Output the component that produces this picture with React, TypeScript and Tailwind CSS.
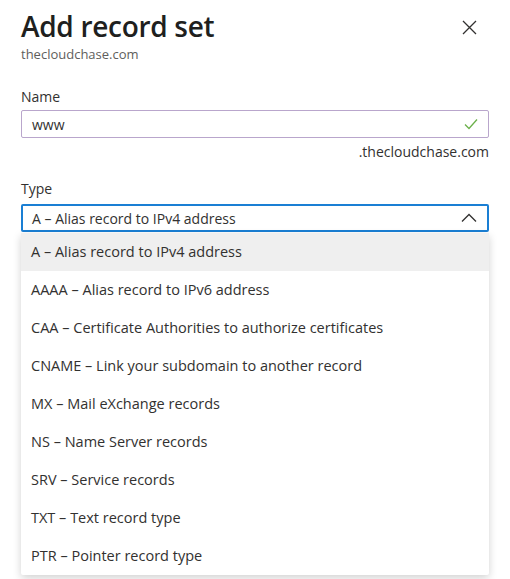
import { useState } from 'react';

const options = [
  'A – Alias record to IPv4 address',
  'AAAA – Alias record to IPv6 address',
  'CAA – Certificate Authorities to authorize certificates',
  'CNAME – Link your subdomain to another record',
  'MX – Mail eXchange records',
  'NS – Name Server records',
  'SRV – Service records',
  'TXT – Text record type',
  'PTR – Pointer record type',
];

export default function App() {
  const [selected] = useState(0);

  return (
    <div className="min-h-screen bg-white text-[#1f1f1f] font-['Open_Sans',sans-serif] px-[21px] pt-[6px]">
      {/* Header */}
      <div className="flex items-start justify-between">
        <div>
          <h1 className="text-[28px] font-semibold leading-[40px] tracking-[-0.3px] text-[#201f1e]">Add record set</h1>
          <p className="text-[13px] text-[#605e5c] leading-[18px] mt-[-1px]">thecloudchase.com</p>
        </div>
        <button className="mt-[14px] mr-[12px] text-[#323130]">
          <svg width="15" height="15" viewBox="0 0 15 15" fill="none" stroke="currentColor" strokeWidth="1.3">
            <path d="M1 1 L14 14 M14 1 L1 14" />
          </svg>
        </button>
      </div>

      {/* Name field */}
      <div className="mt-[25px]">
        <label className="block text-[14px] leading-[18px] text-[#323130]">Name</label>
        <div className="mt-[4px] h-[28px] border border-[#b9a6cc] rounded-[2px] flex items-center justify-between px-[10px]">
          <span className="text-[14px] text-[#323130]">www</span>
          <svg width="14" height="12" viewBox="0 0 14 12" fill="none" stroke="#6bb04a" strokeWidth="1.3">
            <path d="M1 6.5 L5 10.5 L13 1.5" />
          </svg>
        </div>
        <div className="text-right text-[14px] leading-[20px] mt-[4px] text-[#323130]">.thecloudchase.com</div>
      </div>

      {/* Type field */}
      <div className="mt-[18px]">
        <label className="block text-[14px] leading-[18px] text-[#323130]">Type</label>
        <div className="mt-[6px] h-[28px] border-2 border-[#1a7fd4] rounded-[2px] flex items-center justify-between pl-[9px] pr-[10px]">
          <span className="text-[14px] text-[#323130]">{options[selected]}</span>
          <svg width="16" height="10" viewBox="0 0 16 10" fill="none" stroke="#323130" strokeWidth="1.3">
            <path d="M1 8.5 L8 1.5 L15 8.5" />
          </svg>
        </div>
        <ul className="mt-[1px] bg-white shadow-[0_3px_8px_rgba(0,0,0,0.18)] rounded-[2px]">
          {options.map((o, i) => (
            <li
              key={o}
              className={`h-[38px] flex items-center px-[10px] text-[14.5px] text-[#323130] ${i === selected ? 'bg-[#efefef]' : ''}`}
            >
              {o}
            </li>
          ))}
        </ul>
      </div>
    </div>
  );
}
